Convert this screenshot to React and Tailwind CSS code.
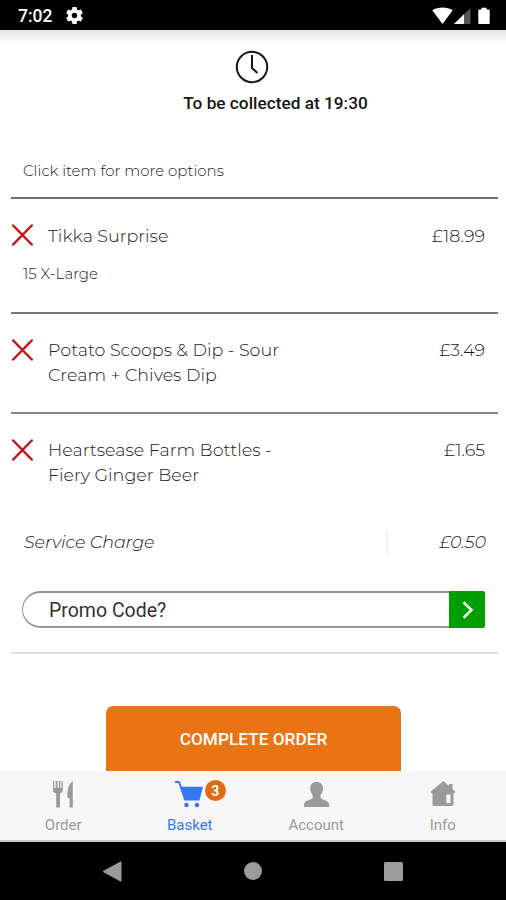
import React from "react";

const bodyFont = "font-['Montserrat','Inter',sans-serif]";

function RemoveIcon() {
  return (
    <svg width="22" height="22" viewBox="0 0 22 22" className="block shrink-0" fill="none" stroke="#c01616" strokeWidth="2.5" strokeLinecap="round">
      <path d="M2.200 1.500 20.700 20.500M20.700 1.500 2.200 20.500" />
    </svg>
  );
}

function StatusBar() {
  return (
    <header className="flex h-[30px] shrink-0 items-center bg-black pl-[18px] pr-[16px] text-white">
      <span className="mt-[2px] w-[48px] text-[17.5px] font-medium leading-5">7:02</span>
      <svg width="17" height="17" viewBox="2 2 20 20" className="mt-px block" fill="#fff">
        <path d="M19.43 12.98c.04-.32.07-.64.07-.98s-.03-.66-.07-.98l2.11-1.65c.19-.15.24-.42.12-.64l-2-3.46c-.12-.22-.39-.3-.61-.22l-2.49 1c-.52-.4-1.08-.73-1.69-.98l-.38-2.65C14.46 2.18 14.25 2 14 2h-4c-.25 0-.46.18-.49.42l-.38 2.65c-.61.25-1.17.59-1.69.98l-2.49-1c-.23-.09-.49 0-.61.22l-2 3.46c-.13.22-.07.49.12.64l2.11 1.65c-.04.32-.07.65-.07.98s.03.66.07.98l-2.11 1.65c-.19.15-.24.42-.12.64l2 3.46c.12.22.39.3.61.22l2.49-1c.52.4 1.08.73 1.69.98l.38 2.65c.03.24.24.42.49.42h4c.25 0 .46-.18.49-.42l.38-2.65c.61-.25 1.17-.59 1.69-.98l2.49 1c.23.09.49 0 .61-.22l2-3.46c.12-.22.07-.49-.12-.64l-2.11-1.65zM12 15.3c-1.8 0-3.3-1.5-3.3-3.3s1.5-3.3 3.3-3.3 3.3 1.5 3.3 3.3-1.5 3.3-3.3 3.3z" />
      </svg>
      <svg width="58" height="18" viewBox="0 0 58 18" className="ml-auto mt-px block">
        <path d="M0.3 3.2C6 -.3 15 -.3 20.7 3.2L10.5 17z" fill="#fff" />
        <path d="M22 17 38.5 1V17z" fill="#555" />
        <path d="M22 17 32 7.3V17z" fill="#fff" />
        <path d="M46.3 3.5a1 1 0 0 1 1-1H49.5V.8h5v1.7h2.2a1 1 0 0 1 1 1V16a1 1 0 0 1-1 1h-9.4a1 1 0 0 1-1-1z" fill="#fff" />
      </svg>
    </header>
  );
}

function BasketItem({ lines, price, note, className }) {
  return (
    <section className={"ml-[11px] mr-[8px] border-t-2 " + className}>
      <div className="flex items-start">
        <div className={"flex items-center " + (note ? "h-[23px]" : "h-[25px]")}><RemoveIcon /></div>
        <div className="ml-[15px] text-[17.5px] leading-[25px]">
          {lines.map((line) => (
            <p key={line} className="whitespace-nowrap">{line}</p>
          ))}
        </div>
        <span className="ml-auto mr-[13px] text-[17.5px] leading-[25px]">{price}</span>
      </div>
      {note && <p className="ml-3 mt-[16px] text-[15px] leading-5">{note}</p>}
    </section>
  );
}

function Tab({ label, active, badge, children }) {
  return (
    <button className={"flex w-[126.5px] flex-col items-center pt-[8px] " + (active ? "text-[#3478f6]" : "text-[#9a9a9a]")}>
      <span className="relative block h-[30px] w-[30px]">
        {children}
        {badge && (
          <span className="absolute left-[30px] top-px flex h-[21px] w-[21px] items-center justify-center rounded-full bg-[#df6c12] text-[14px] font-bold leading-none text-white">{badge}</span>
        )}
      </span>
      <span className="mt-[7px] text-[15px] leading-[18px]">{label}</span>
    </button>
  );
}

export default function App() {
  return (
    <div className="flex h-[900px] w-[506px] flex-col overflow-hidden bg-white font-['Roboto',sans-serif]">
      <StatusBar />
      <main className="flex h-[741px] shrink-0 flex-col overflow-hidden">
        <div className="h-[14px] shrink-0 bg-linear-to-b from-[#e3e3e3] to-white" />
        <div className="flex flex-col items-center pt-[6px]">
          <svg width="34" height="34" viewBox="0 0 34 34" fill="none" stroke="#161616" strokeWidth="2" className="mr-[2px] block">
            <circle cx="17" cy="17" r="15.2" />
            <path d="M17 5V18l5.5 5" />
          </svg>
          <p className="ml-[45px] mt-[9px] text-[17.25px] font-medium leading-5 text-[#161616]">To be collected at 19:30</p>
        </div>
        <div className={"font-light text-[#202020] " + bodyFont}>
          <p className="ml-[23px] mt-[48px] text-[15px] leading-5">Click item for more options</p>
          <BasketItem className="mt-[16px] h-[115px] border-[#707070] pt-[24px]" lines={["Tikka Surprise"]} price="£18.99" note="15 X-Large" />
          <BasketItem className="h-[100px] border-[#777] pt-[23px]" lines={["Potato Scoops & Dip - Sour", "Cream + Chives Dip"]} price="£3.49" />
          <BasketItem className="h-[100px] border-[#858585] pt-[23px]" lines={["Heartsease Farm Bottles -", "Fiery Ginger Beer"]} price="£1.65" />
          <div className="mt-[18px] flex h-[25px] items-center pl-6 pr-[20px] text-[17.5px] italic">
            <span className="tracking-[-0.1px]">Service Charge</span>
            <span className="ml-auto h-6 w-[2px] bg-[#f0f0f0]" />
            <span className="w-[98px] text-right">£0.50</span>
          </div>
        </div>
        <div className="ml-[22px] mt-[36px] flex h-[37px] w-[463px] shrink-0">
          <div className="flex grow items-center rounded-l-full border-y-2 border-l-[1.5px] border-[#959595] pl-[26px] pt-[2px] text-[19.5px] text-[#333]">Promo Code?</div>
          <button className="flex w-9 items-center justify-center rounded-r-[2px] bg-[#009f00]">
            <svg width="12" height="18" viewBox="0 0 12 18" fill="none" stroke="#e9ffe9" strokeWidth="2.6" className="ml-[2px] block"><path d="m1.500 1.200 8 7.800-8 7.800" /></svg>
          </button>
        </div>
        <div className="ml-[11px] mr-[8px] mt-[24px] h-[2px] shrink-0 bg-[#dedede]" />
        <button className="ml-[106px] mt-[52px] h-[80px] w-[295px] shrink-0 rounded-[7px] bg-[#e97414] pb-[12px] text-[17.25px] font-medium text-white">COMPLETE ORDER</button>
      </main>
      <nav className="flex h-[71px] shrink-0 border-b-2 border-[#c8c8c8] bg-[#f7f7f7]">
        <Tab label="Order">
          <svg width="30" height="30" viewBox="0 0 30 30" fill="currentColor">
            <path d="M5 2h1.3v7h1.4V2h1.7v7h1.4V2h1.5v7h1.2V2h1.3v9c0 2-1 3-2.8 3.6V28.5H8.2V14.6C6.2 14 5 13 5 11zM24.8 2v26.5h-3.2V19h-2.1c-.6-6 .5-13.500 5.300-17z" />
          </svg>
        </Tab>
        <Tab label="Basket" active badge="3">
          <svg width="30" height="30" viewBox="0 0 30 30" fill="currentColor">
            <path d="M0 2h4.700l2.100 5.800H28l-3.500 13.700H9.300L3.500 4H0z" />
            <circle cx="11.500" cy="26" r="2.300" /><circle cx="22" cy="26" r="2.300" />
          </svg>
        </Tab>
        <Tab label="Account">
          <svg width="30" height="30" viewBox="0 0 30 30" fill="currentColor">
            <path d="M15.500 3c4.300 0 6.700 2.700 6.500 7-.1 2.800-1.200 4.200-2.500 6v2.800c.8 2.200 8 2.200 8.600 6.200l.2 3H2.900l.2-3c.6-4 7.800-4 8.600-6.200V16c-1.300-1.800-2.400-3.200-2.500-6-.2-4.300 2-7 6.300-7z" />
          </svg>
        </Tab>
        <Tab label="Info">
          <svg width="30" height="30" viewBox="0 0 30 30" fill="currentColor" fillRule="evenodd">
            <path d="M15.500 2l5.500 5V5h3.500v5l3 2.700-1.200 1.700-.8-.5V25q0 2-2 2h-17q-2 0-2-2V13.900l-.8.5L2.500 12.700zM18.300 15.500v8.500h4.200v-8.500z" />
          </svg>
        </Tab>
      </nav>
      <footer className="flex grow items-center justify-between bg-black pl-[102px] pr-[103px]">
        <svg width="20" height="21" viewBox="0 0 20 21" fill="#9b9b9b"><path d="M1 10.500 19 .8V20.200z" stroke="#9b9b9b" strokeLinejoin="round" /></svg>
        <span className="h-[18px] w-[18px] rounded-full bg-[#9b9b9b]" />
        <span className="h-[19px] w-[19px] rounded-[1.5px] bg-[#9b9b9b]" />
      </footer>
    </div>
  );
}
